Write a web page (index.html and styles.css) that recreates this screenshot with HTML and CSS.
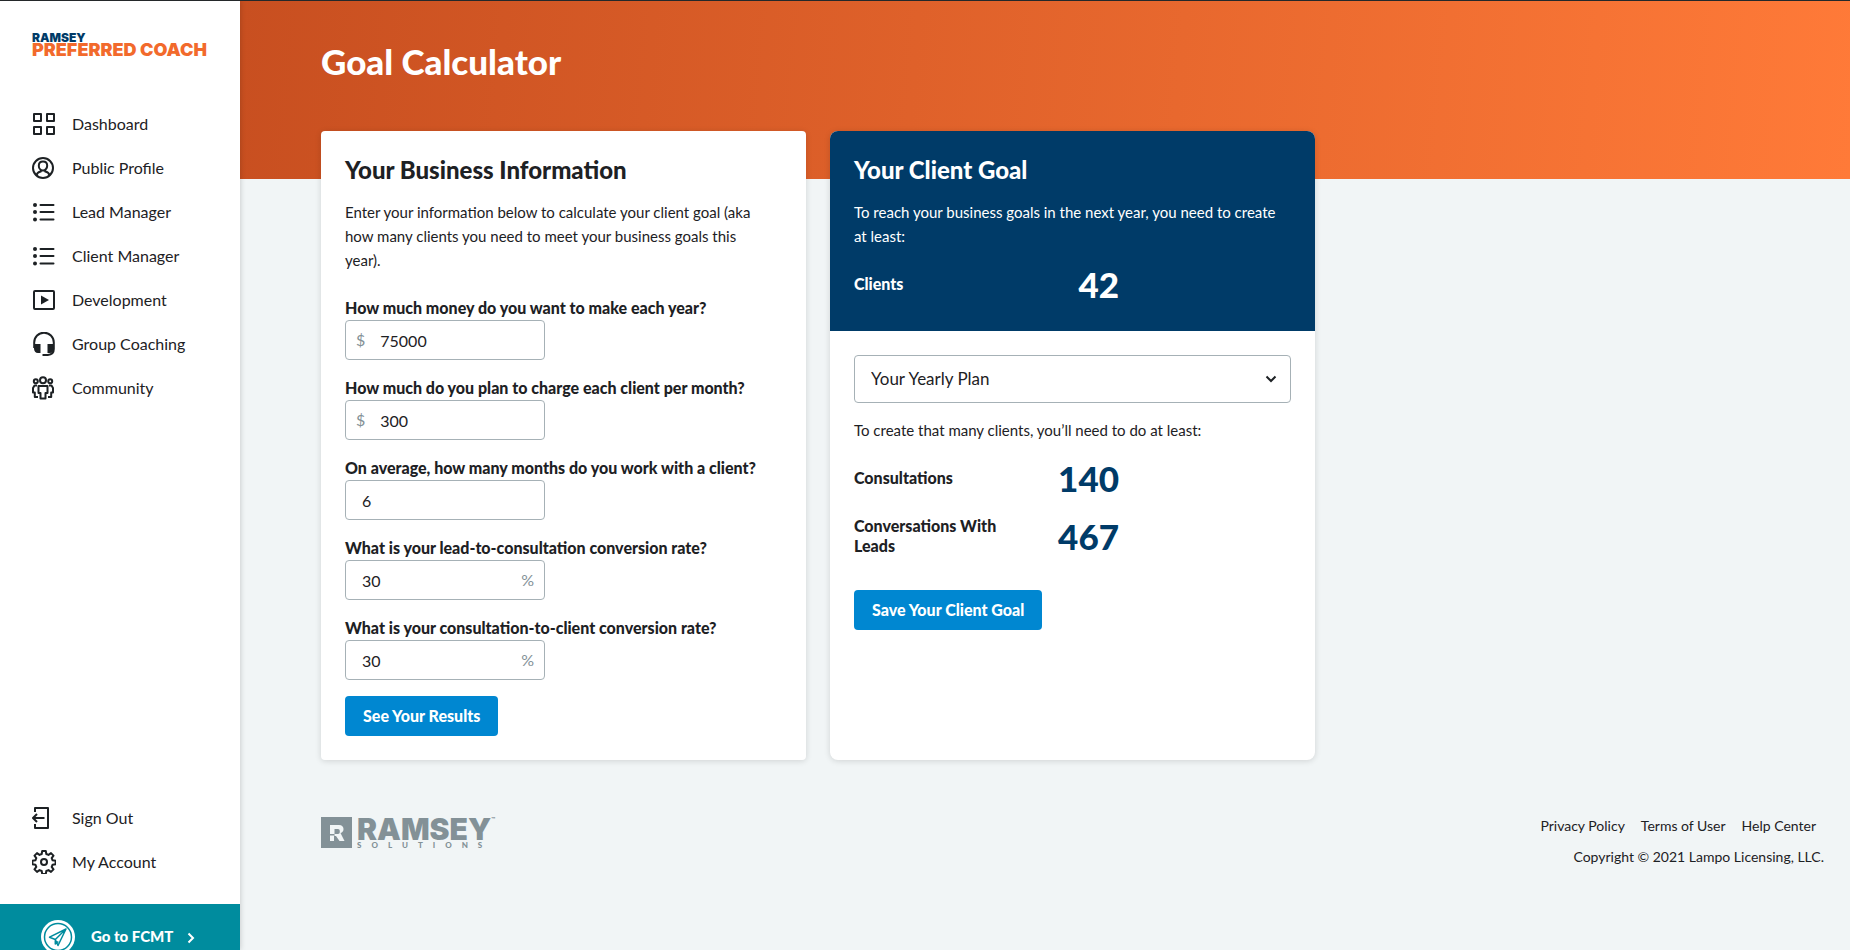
FILE: index.html
```html
<!DOCTYPE html>
<html lang="en">
<head>
<meta charset="utf-8">
<meta name="viewport" content="width=device-width, initial-scale=1">
<title>Goal Calculator</title>
<link rel="stylesheet" href="styles.css">
</head>
<body>
<div class="app">
  <aside class="sidebar">
    <a class="brand" href="#"><span class="brand-top">RAMSEY</span><span class="brand-name">PREFERRED COACH</span></a>
    <nav class="nav" aria-label="Main">
      <a class="nav-link" href="#"><svg class="icon" viewBox="0 0 24 24"><path d="M2 2h7v7H2zM15 2h7v7h-7zM2 15h7v7H2zM15 15h7v7h-7z"/></svg>Dashboard</a>
      <a class="nav-link" href="#"><svg class="icon" viewBox="0 0 24 24"><circle cx="11" cy="12" r="10"/><path d="M11 5.500c2.800 0 4.200 2 4.200 4.200S13.600 14.500 11 14.500 6.800 12 6.800 9.700 8.200 5.500 11 5.500zM4.500 19.200c.6-2.400 2-3.200 4.300-3.600v-1.500M17.500 19.200c-.6-2.400-2-3.200-4.300-3.600v-1.500"/></svg>Public Profile</a>
      <a class="nav-link" href="#"><svg class="icon" viewBox="0 0 24 24"><path d="M8.500 5h13M8.500 12h13M8.500 19.500h13" stroke-linecap="round"/><g class="fill"><circle cx="3" cy="5" r="2"/><circle cx="3" cy="12" r="2"/><circle cx="3" cy="19.500" r="2"/></g></svg>Lead Manager</a>
      <a class="nav-link" href="#"><svg class="icon" viewBox="0 0 24 24"><path d="M8.500 5h13M8.500 12h13M8.500 19.500h13" stroke-linecap="round"/><g class="fill"><circle cx="3" cy="5" r="2"/><circle cx="3" cy="12" r="2"/><circle cx="3" cy="19.500" r="2"/></g></svg>Client Manager</a>
      <a class="nav-link" href="#"><svg class="icon" viewBox="0 0 24 24"><rect x="2" y="3" width="20" height="18" rx="1"/><path class="fill" d="M9 7.500v9l8-4.500z"/></svg>Development</a>
      <a class="nav-link" href="#"><svg class="icon" viewBox="0 0 24 24"><path d="M2.200 16v-5.500a9.800 9.800 0 0 1 19.600 0V17c0 4-2 5.700-6 5.900H10.500"/><path class="fill" d="M2 12h6.500v9H6c-2.500 0-4-2-4-4.500zM15.500 12H22v4.500c0 2.500-1.500 4.500-4 4.500h-2.500z"/></svg>Group Coaching</a>
      <a class="nav-link" href="#"><svg class="icon" viewBox="0 0 24 24"><circle cx="11" cy="4.300" r="3"/><circle cx="3.800" cy="5.200" r="2"/><circle cx="18.200" cy="5.200" r="2"/><path d="M6.500 10h9v7h-2v5.500h-5V17h-2zM5 9.500H2.500L1 12v4.500h1.800V21H6M17 9.500h2.500L21 12v4.500h-1.800V21H16"/></svg>Community</a>
    </nav>
    <nav class="nav nav-bottom" aria-label="Account">
      <a class="nav-link" href="#"><svg class="icon" viewBox="0 0 24 24"><path d="M3 6V2h13v20H3v-4M12.500 12H1.500M5 8l-4 4 4 4"/></svg>Sign Out</a>
      <a class="nav-link" href="#"><svg class="icon" viewBox="0 0 24 24"><path d="M10.200 1h3.600l.5 3 2.200.9 2.500-1.800 2.500 2.500-1.800 2.500.9 2.200 3 .5v3.400l-3 .5-.9 2.200 1.800 2.500-2.500 2.500-2.500-1.800-2.200.9-.5 3h-3.600l-.5-3-2.200-.9-2.500 1.800-2.500-2.500 1.800-2.500-.9-2.200-3-.5v-3.400l3-.5.9-2.200-1.800-2.500 2.500-2.500 2.500 1.800 2.200-.9z"/><circle cx="12" cy="12" r="3"/></svg>My Account</a>
    </nav>
    <a class="fcmt" href="#"><svg class="fcmt-badge" viewBox="0 0 34 34"><circle cx="17" cy="17" r="17" fill="#fff"/><circle cx="17" cy="17" r="13.500" fill="none" stroke="#008c9e" stroke-width="1.500"/><path d="M25 9 8.500 17.200l5.800 2.300 2.700 6zM25 9 14.300 19.500v4.500l3-2.500" fill="none" stroke="#008c9e" stroke-width="1.500" stroke-linejoin="round"/></svg>Go to FCMT<svg class="fcmt-arrow" viewBox="0 0 8 12"><path d="m1.500 1.500 4.500 4.500-4.500 4.500" fill="none" stroke="currentColor" stroke-width="2"/></svg></a>
  </aside>
  <main class="main">
    <header class="hero"><h1 class="title">Goal Calculator</h1></header>
    <div class="cards">
      <section class="card card-form">
        <h2 class="card-title">Your Business Information</h2>
        <p class="copy">Enter your information below to calculate your client goal (aka how many clients you need to meet your business goals this year).</p>
        <form class="form">
          <div class="field"><label class="label" for="income">How much money do you want to make each year?</label><div class="control"><span class="unit">$</span><input class="input" id="income" value="75000"></div></div>
          <div class="field"><label class="label" for="charge">How much do you plan to charge each client per month?</label><div class="control"><span class="unit">$</span><input class="input" id="charge" value="300"></div></div>
          <div class="field"><label class="label" for="months">On average, how many months do you work with a client?</label><div class="control"><input class="input" id="months" value="6"></div></div>
          <div class="field"><label class="label" for="lead-rate">What is your lead-to-consultation conversion rate?</label><div class="control"><input class="input" id="lead-rate" value="30"><span class="unit">%</span></div></div>
          <div class="field"><label class="label" for="client-rate">What is your consultation-to-client conversion rate?</label><div class="control"><input class="input" id="client-rate" value="30"><span class="unit">%</span></div></div>
          <button class="button" type="button">See Your Results</button>
        </form>
      </section>
      <section class="card card-goal">
        <div class="goal-top">
          <h2 class="card-title">Your Client Goal</h2>
          <p class="copy">To reach your business goals in the next year, you need to create at least:</p>
          <div class="stat"><span class="stat-name">Clients</span><span class="stat-value">42</span></div>
        </div>
        <div class="goal-body">
          <div class="select-wrap">
            <select class="select" aria-label="Plan period"><option>Your Yearly Plan</option></select>
            <svg class="select-arrow" viewBox="0 0 12 8"><path d="m1.500 1.500 4.500 4.500 4.500-4.500" fill="none" stroke="currentColor" stroke-width="2"/></svg>
          </div>
          <p class="copy">To create that many clients, you’ll need to do at least:</p>
          <div class="stat"><span class="stat-name">Consultations</span><span class="stat-value">140</span></div>
          <div class="stat"><span class="stat-name">Conversations With Leads</span><span class="stat-value">467</span></div>
          <button class="button" type="button">Save Your Client Goal</button>
        </div>
      </section>
    </div>
    <footer class="footer">
      <a class="company" href="#">
        <svg class="company-mark" viewBox="0 0 31 31"><path fill="#839197" d="M0 0h31v31H0z"/><path fill="#f1f5f6" fill-rule="evenodd" d="M9 8h9c3 0 4.500 1.700 4.500 4 0 2-1 3.500-3 4l4 8h-5l-3.500-5h-1.500V17H17c1.200 0 1.800-.7 1.800-2.500S18 12 17 12h-3.500v5H9zM9 18.500h4V24H9z"/></svg>
        <span class="company-words"><span class="company-name">RAMSEY<span class="tm">™</span></span><span class="company-sub">SOLUTIONS</span></span>
      </a>
      <div class="legal">
        <nav class="legal-links" aria-label="Legal"><a href="#">Privacy Policy</a><a href="#">Terms of User</a><a href="#">Help Center</a></nav>
        <p class="copyright">Copyright © 2021 Lampo Licensing, LLC.</p>
      </div>
    </footer>
  </main>
</div>
</body>
</html>
```
FILE: styles.css
```css
* { box-sizing: border-box; }
body { margin: 0; background: #f1f5f6; color: #1d2124; font: 16px/24px Lato, "Liberation Sans", sans-serif; }
a { color: inherit; text-decoration: none; }
h1, h2, p { margin: 0; }
.app { display: flex; height: 100vh; overflow: hidden; border-top: 1px solid #24282a; }

.sidebar { display: flex; flex-direction: column; flex: 0 0 240px; min-width: 0; background: #fff; box-shadow: 0 0 6px rgba(0, 0, 0, .2); z-index: 1; }
.brand { display: flex; flex-direction: column; padding: 32px 32px 0; font-family: Inter, sans-serif; font-weight: 900; white-space: nowrap; }
.brand-top { color: #003b68; font-size: 12px; line-height: 9px; }
.brand-name { color: #f26a2c; font-size: 18px; line-height: 16px; }
.nav { display: flex; flex-direction: column; padding: 44px 32px 0; }
.nav-link { display: flex; align-items: center; gap: 16px; height: 44px; }
.icon { width: 24px; height: 24px; fill: none; stroke: currentColor; stroke-width: 2; stroke-linejoin: round; }
.fill { fill: currentColor; stroke: none; }
.nav-bottom { margin-top: auto; padding: 0 32px 20px; }
.fcmt { display: flex; align-items: flex-start; flex: none; height: 46px; padding: 16px 32px 0 41px; overflow: hidden; background: #008c9e; color: #fff; font-size: 15px; font-weight: 900; line-height: 32px; }
.fcmt-badge { width: 34px; height: 34px; margin-right: 16px; }
.fcmt-arrow { width: 8px; height: 12px; margin: 12px 0 0 14px; }

.main { flex: 1; min-width: 0; }
.hero { height: 178px; padding: 36px 81px; background: linear-gradient(95deg, #c84f20, #ff7a38); color: #fff; }
.title { font-size: 35px; line-height: 48px; font-weight: 900; }
.cards { display: grid; grid-template-columns: 1fr 1fr; gap: 24px; max-width: 994px; margin: -48px 81px 0; }
.card { background: #fff; border-radius: 4px; box-shadow: 0 1px 6px rgba(0, 0, 0, .14); }
.card-form { padding: 24px; }
.card-goal { border-radius: 8px; overflow: hidden; }
.card-title { font-size: 24px; line-height: 30px; font-weight: 900; }
.copy { padding-right: 10px; font-size: 15px; }
.card-title + .copy { margin-top: 15px; }
.form { margin-top: 24px; }
.field { margin-bottom: 16px; }
.label { display: block; font-weight: 900; line-height: 24px; }
.control { display: flex; align-items: center; width: 200px; height: 40px; border: 1px solid #a6b1b6; border-radius: 4px; }
.input { flex: 1; min-width: 0; height: 100%; padding: 0 16px; border: 0; background: none; color: inherit; font: inherit; }
.unit { padding: 0 10px; color: #839197; }
.unit + .input { padding-left: 5px; }
.button { height: 40px; padding: 0 18px; border: 0; border-radius: 4px; background: #0087d1; color: #fff; font: inherit; font-weight: 900; }
.goal-top { height: 200px; padding: 24px; background: #003b68; color: #fff; }
.goal-body { padding: 24px; }
.stat { display: grid; grid-template-columns: 160px 105px; align-items: center; margin-top: 14px; }
.stat-name { font-weight: 900; line-height: 20px; }
.stat-value { color: #003b68; font-size: 35px; line-height: 44px; font-weight: 900; text-align: right; }
.goal-top .stat-value { color: inherit; }
.goal-body .button { margin-top: 32px; }
.select-wrap { position: relative; margin-bottom: 15px; }
.select { width: 100%; height: 48px; padding: 0 16px; appearance: none; border: 1px solid #a6b1b6; border-radius: 4px; background: #fff; color: inherit; font: inherit; font-size: 17px; }
.select-arrow { position: absolute; right: 14px; top: 20px; width: 12px; height: 8px; pointer-events: none; }

.footer { display: flex; justify-content: space-between; padding: 54px 26px 0 81px; }
.company { display: flex; gap: 5px; padding-top: 3px; color: #839197; font-weight: 900; }
.company-mark { width: 31px; height: 31px; }
.company-words { display: flex; flex-direction: column; }
.company-name { display: flex; font-family: Inter, sans-serif; font-size: 30px; line-height: 24px; }
.tm { font-size: 6px; line-height: 6px; }
.company-sub { font-size: 8px; line-height: 9px; letter-spacing: 10px; }
.legal { font-size: 14px; line-height: 24px; text-align: right; }
.legal-links { display: flex; justify-content: flex-end; gap: 16px; padding-right: 8px; }
.copyright { margin-top: 7px; }
```
